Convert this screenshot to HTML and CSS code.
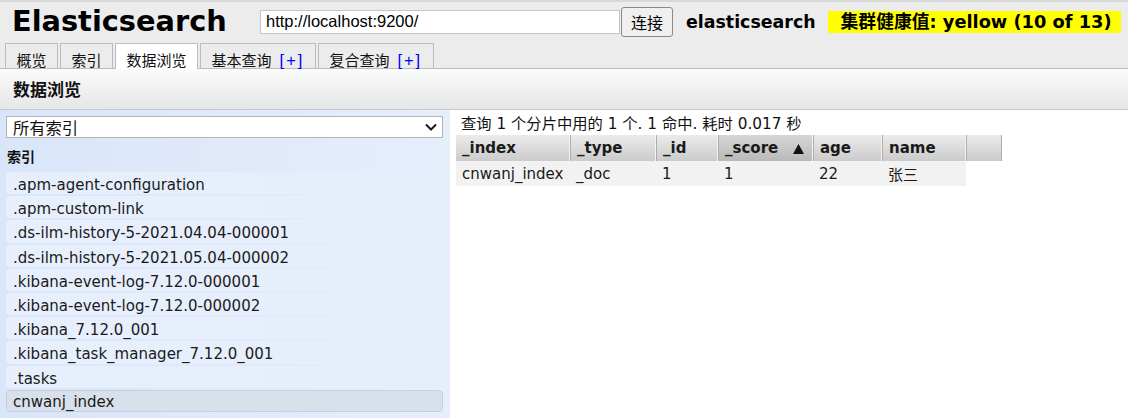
FILE: index.html
```html
<!DOCTYPE html>
<html lang="zh">
<head>
<meta charset="utf-8">
<title>Elasticsearch</title>
<link rel="stylesheet" href="styles.css">
</head>
<body>
<header class="top">
  <h1 class="logo">Elasticsearch</h1>
  <input class="url" type="text" value="http://localhost:9200/">
  <button class="connect">连接</button>
  <span class="cluster">elasticsearch</span>
  <span class="health">集群健康值: yellow (10 of 13)</span>
</header>
<nav class="tabs">
  <div class="tab">概览</div>
  <div class="tab">索引</div>
  <div class="tab active">数据浏览</div>
  <div class="tab">基本查询<span class="plus">[+]</span></div>
  <div class="tab">复合查询<span class="plus">[+]</span></div>
</nav>
<div class="panel-head">数据浏览</div>
<main class="main">
  <aside class="side">
    <div class="select">
      <span>所有索引</span>
      <svg class="chev" width="12" height="8" viewBox="0 0 12 8"><path d="M1 1.5 L6 6.5 L11 1.5" fill="none" stroke="#1a1a1a" stroke-width="2"/></svg>
    </div>
    <div class="label">索引</div>
    <ul class="list">
      <li>.apm-agent-configuration</li>
      <li>.apm-custom-link</li>
      <li>.ds-ilm-history-5-2021.04.04-000001</li>
      <li>.ds-ilm-history-5-2021.05.04-000002</li>
      <li>.kibana-event-log-7.12.0-000001</li>
      <li>.kibana-event-log-7.12.0-000002</li>
      <li>.kibana_7.12.0_001</li>
      <li>.kibana_task_manager_7.12.0_001</li>
      <li>.tasks</li>
      <li class="sel">cnwanj_index</li>
    </ul>
  </aside>
  <section class="results">
    <div class="info">查询 1 个分片中用的 1 个. 1 命中. 耗时 0.017 秒</div>
    <table class="grid">
      <colgroup>
        <col class="c1"><col class="c2"><col class="c3"><col class="c4"><col class="c5"><col class="c6"><col class="c7">
      </colgroup>
      <thead>
        <tr>
          <th>_index</th>
          <th>_type</th>
          <th>_id</th>
          <th class="sorted">_score<svg class="arrow" width="11" height="10" viewBox="0 0 11 10"><polygon points="5.5,0 11,10 0,10" fill="#111"/></svg></th>
          <th>age</th>
          <th>name</th>
          <th class="extra"></th>
        </tr>
      </thead>
      <tbody>
        <tr>
          <td>cnwanj_index</td>
          <td>_doc</td>
          <td>1</td>
          <td>1</td>
          <td>22</td>
          <td>张三</td>
        </tr>
      </tbody>
    </table>
  </section>
</main>
</body>
</html>
```

FILE: styles.css
```css
* { box-sizing: border-box; }
html, body { margin: 0; padding: 0; height: 100%; }
body {
  background: #ececec;
  font-family: "DejaVu Sans", "Noto Sans CJK SC", sans-serif;
  color: #111;
  border-top: 2px solid #d9d9d9;
  overflow: hidden;
  display: flex;
  flex-direction: column;
}

/* top bar */
.top {
  display: flex;
  align-items: center;
  height: 41px;
  padding-bottom: 2px;
}
.logo {
  margin: 0;
  width: 260px;
  padding-left: 12px;
  font-family: "DejaVu Sans", sans-serif;
  font-weight: bold;
  font-size: 28.8px;
  line-height: 1;
  color: #000;
}
.url {
  width: 360px;
  height: 24px;
  border: 1px solid #c6c6c6;
  background: #fff;
  padding: 0 5px;
  font-family: "Liberation Sans", Arial, sans-serif;
  font-size: 16.5px;
  color: #000;
  outline: none;
}
.connect {
  width: 52px;
  height: 30px;
  margin-left: 1px;
  border: 1px solid #8a8a8a;
  border-radius: 3px;
  background: #efefef;
  font-family: "Noto Sans CJK SC", sans-serif;
  font-size: 16px;
  color: #000;
  padding: 0;
}
.cluster {
  margin-left: 13px;
  font-weight: bold;
  font-size: 17.4px;
  color: #000;
}
.health {
  margin-left: 12px;
  width: 293px;
  height: 22px;
  line-height: 22px;
  background: #ffff00;
  padding-left: 13px;
  font-weight: bold;
  font-size: 17.8px;
  color: #000;
  white-space: nowrap;
}

/* tabs */
.tabs {
  display: flex;
  align-items: flex-end;
  gap: 2px;
  padding-left: 5px;
  border-bottom: 1px solid #bcbcbc;
}
.tab {
  height: 25px;
  border: 1px solid #bcbcbc;
  border-bottom: none;
  padding: 7px 10.5px 0;
  line-height: 17px;
  font-family: "Noto Sans CJK SC", sans-serif;
  font-size: 15px;
  color: #111;
  white-space: nowrap;
}
.tab.active {
  height: 26px;
  margin-bottom: -1px;
  background: #fff;
}
.plus {
  margin-left: 8px;
  font-family: "Liberation Sans", Arial, sans-serif;
  font-size: 16.5px;
  letter-spacing: 2px;
  color: #0000ff;
}

/* panel header */
.panel-head {
  height: 41px;
  border-bottom: 1px solid #c8c8c8;
  background: linear-gradient(#fbfbfb, #e5e6e7);
  padding-left: 13px;
  line-height: 40px;
  font-family: "Noto Sans CJK SC", sans-serif;
  font-weight: bold;
  font-size: 17px;
  color: #111;
}

/* main */
.main {
  flex: 1;
  display: flex;
  min-height: 0;
}
.side {
  width: 450px;
  flex: none;
  background: linear-gradient(to right, #d9e5f9, #e6eefc);
  padding: 6px 7px 0 6px;
}
.select {
  height: 22px;
  border: 1px solid #b4b4b4;
  background: #fff;
  display: flex;
  align-items: center;
  justify-content: space-between;
  padding: 0 5px 0 6px;
  font-family: "Noto Sans CJK SC", sans-serif;
  font-size: 16.3px;
  color: #111;
}
.label {
  margin-top: 9px;
  padding-left: 1px;
  line-height: 18px;
  font-family: "Noto Sans CJK SC", sans-serif;
  font-weight: bold;
  font-size: 14px;
  color: #111;
}
.list {
  list-style: none;
  margin: 7px 0 0;
  padding: 0;
}
.list li {
  height: 22.2px;
  padding-top: 4px;
  line-height: 18.2px;
  margin-bottom: 2px;
  padding-left: 7px;
  border-radius: 4px;
  background: linear-gradient(to right, #e8effc, #e5edfb);
  font-size: 15px;
  color: #1a1a1a;
  white-space: nowrap;
}
.list li.sel {
  background: #d8e0eb;
  border: 1px solid #c6cfdb;
  padding-left: 6px;
  padding-top: 3px;
  line-height: 17.2px;
}

/* results */
.results {
  flex: 1;
  background: #fff;
  padding: 5px 0 0 6px;
}
.info {
  padding-left: 5px;
  line-height: 18px;
  font-size: 15.3px;
  color: #111;
  white-space: nowrap;
}
.grid {
  margin-top: 2px;
  width: 546px;
  table-layout: fixed;
  border-collapse: separate;
  border-spacing: 0;
}
.c1 { width: 114px; }
.c2 { width: 86px; }
.c3 { width: 62px; }
.c4 { width: 95px; }
.c5 { width: 69px; }
.c6 { width: 84px; }
.c7 { width: 36px; }
.grid th {
  height: 26px;
  padding: 0 6px;
  text-align: left;
  font-size: 15px;
  font-weight: bold;
  color: #1a1a1a;
  background: linear-gradient(#ebebeb, #cbcbcb);
  border-right: 1px solid #f4f4f4;
  white-space: nowrap;
}
.grid th + th { border-left: 1px solid #adadad; }
.grid th.sorted { background: linear-gradient(#d6d6d6, #b9b9b9); }
.grid th.extra { border-right: 1px solid #adadad; }
.arrow { margin-left: 15px; vertical-align: -1px; }
.grid td {
  height: 25px;
  padding: 0 6px;
  background: #f2f2f2;
  font-size: 15px;
  color: #1a1a1a;
  white-space: nowrap;
}
```
